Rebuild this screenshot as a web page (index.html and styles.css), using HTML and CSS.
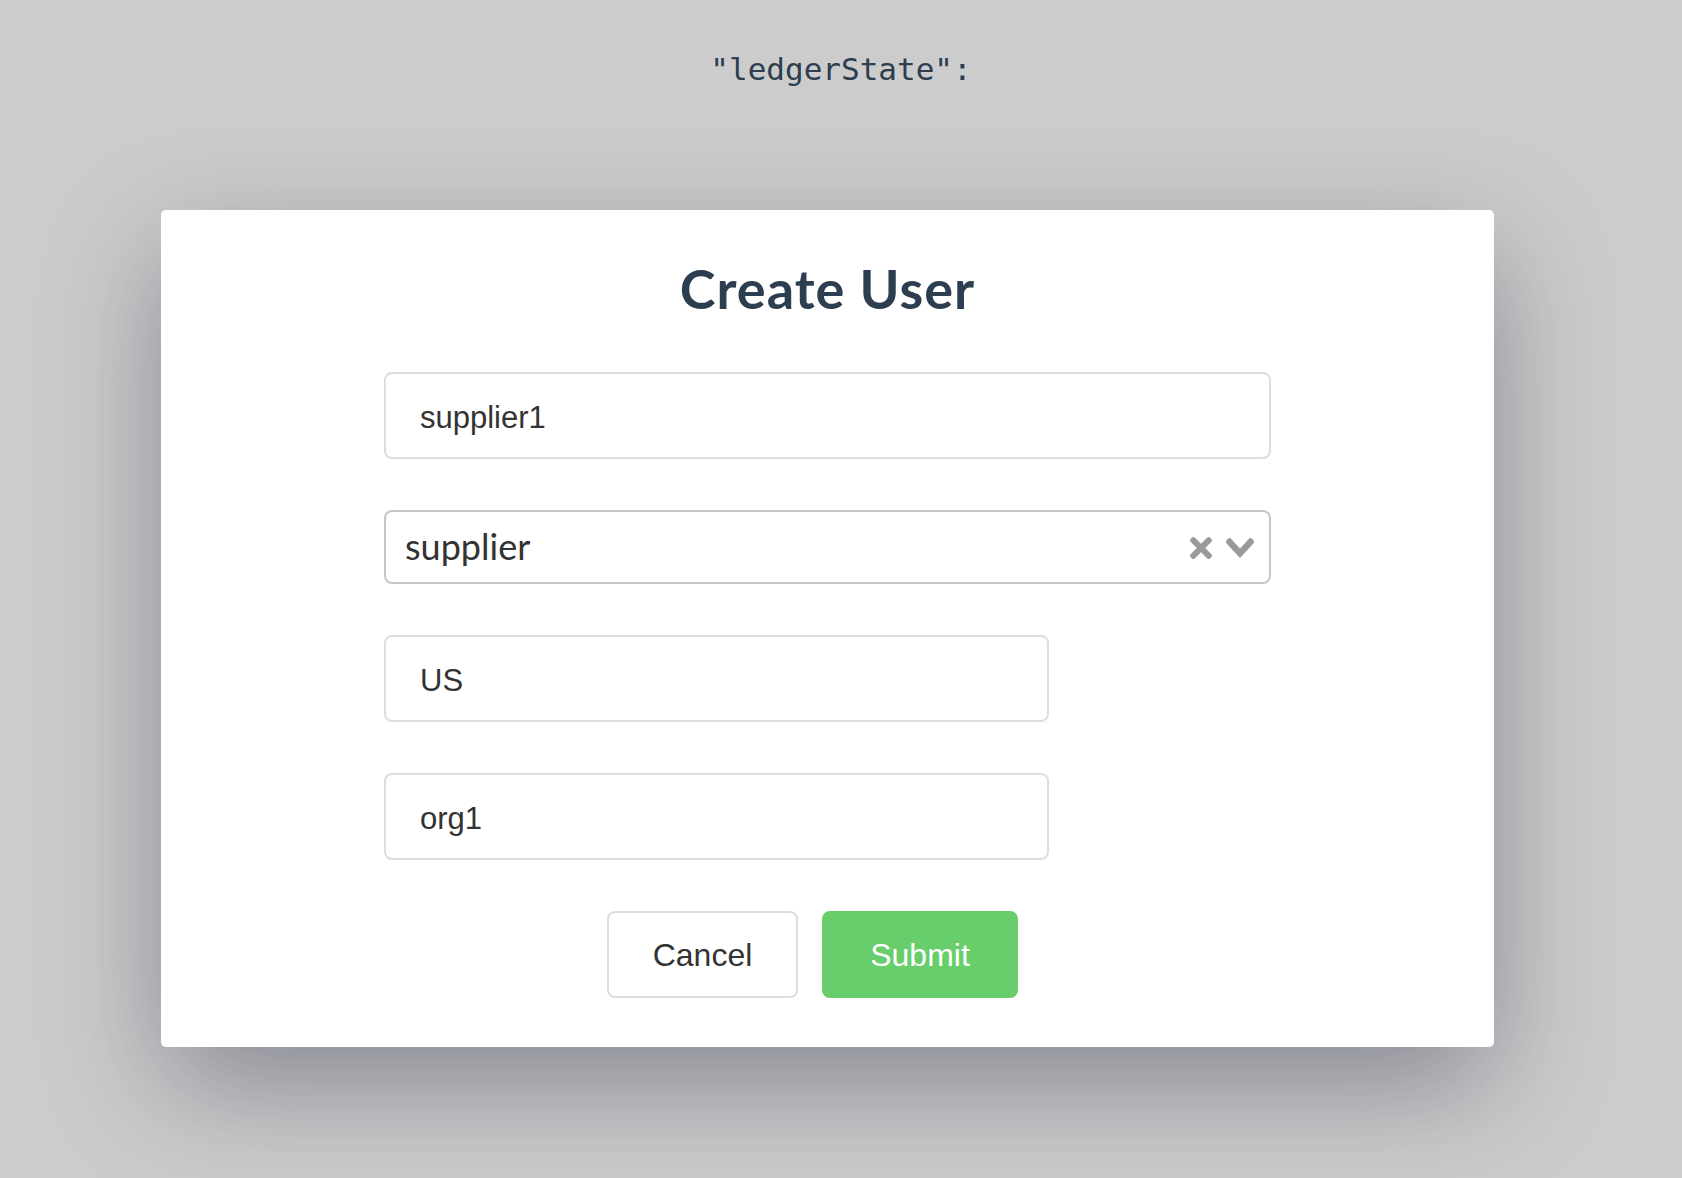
FILE: index.html
```html
<!DOCTYPE html>
<html lang="en">
<head>
<meta charset="utf-8">
<title>Create User</title>
<link rel="stylesheet" href="styles.css">
</head>
<body>
  <div class="page">
    <pre class="state">"ledgerState":</pre>
  </div>
  <div class="modal">
    <h1 class="title">Create User</h1>
    <form class="form">
      <input class="field" type="text" value="supplier1">
      <div class="select">
        <span class="select-value">supplier</span>
        <span class="select-actions">
          <svg class="icon-clear" width="22" height="22" viewBox="0 0 10 10"><path d="M6.895455 5l2.842897-2.842898c.348864-.348863.348864-.914488 0-1.263636L9.106534.261648c-.348864-.348864-.914489-.348864-1.263636 0L5 3.104545 2.157102.261648c-.348863-.348864-.914488-.348864-1.263636 0L.261648.893466c-.348864.348864-.348864.914489 0 1.263636L3.104545 5 .261648 7.842898c-.348864.348863-.348864.914488 0 1.263636l.631818.631818c.348864.348864.914773.348864 1.263636 0L5 6.895455l2.842898 2.842897c.348863.348864.914772.348864 1.263636 0l.631818-.631818c.348864-.348864.348864-.914489 0-1.263636L6.895455 5z"/></svg>
          <svg class="icon-open" width="30" height="20" viewBox="0 0 14 10"><path d="M9.211364 7.59931l4.48338-4.867229c.407008-.441854.407008-1.158247 0-1.60046l-.73712-.80023c-.407008-.441854-1.066904-.441854-1.474243 0L7 5.198617 2.51662.33139c-.407008-.441854-1.066904-.441854-1.474243 0l-.737121.80023c-.407008.441854-.407008 1.158248 0 1.600461l4.48338 4.867228L7 10l2.211364-2.40069z"/></svg>
        </span>
      </div>
      <input class="field field-short" type="text" value="US">
      <input class="field field-short" type="text" value="org1">
      <div class="actions">
        <button type="button" class="btn btn-cancel">Cancel</button>
        <button type="button" class="btn btn-submit">Submit</button>
      </div>
    </form>
  </div>
</body>
</html>
```
FILE: styles.css
```css
html, body {
  margin: 0;
  padding: 0;
}
body {
  background: #cccccc;
  height: 1178px;
  overflow: hidden;
  font-family: "Lato", "Liberation Sans", sans-serif;
}
.page {
  display: flex;
  justify-content: center;
  padding-top: 51px;
}
.state {
  margin: 0;
  font-family: "DejaVu Sans Mono", monospace;
  font-size: 31px;
  line-height: 36px;
  color: #2c3e50;
}
.modal {
  position: absolute;
  left: 161px;
  top: 210px;
  width: 1333px;
  height: 837px;
  box-sizing: border-box;
  background: #ffffff;
  border-radius: 5px;
  box-shadow: 0 40px 120px -4px rgba(27, 33, 58, 0.4);
  padding: 47px 223px 49px;
}
.title {
  margin: 0;
  text-align: center;
  font-family: "Lato", sans-serif;
  font-weight: 700;
  font-size: 54px;
  letter-spacing: 1px;
  line-height: 64px;
  color: #2c3e50;
}
.form {
  margin-top: 51px;
  display: flex;
  flex-direction: column;
  gap: 51px;
}
.field {
  box-sizing: border-box;
  width: 100%;
  height: 87px;
  margin: 0;
  border: 2px solid #dddddd;
  border-radius: 8px;
  padding: 4px 34px 0;
  font-family: "Liberation Sans", Arial, sans-serif;
  font-size: 31px;
  color: #333333;
  background: #ffffff;
  outline: none;
}
.field-short {
  width: 665px;
}
.select {
  box-sizing: border-box;
  height: 74px;
  border: 2px solid #c6c6c6;
  border-radius: 8px;
  display: flex;
  align-items: center;
  justify-content: space-between;
  padding: 0 14px 0 19px;
}
.select-value {
  font-family: "Lato", sans-serif;
  font-size: 36px;
  color: #333333;
  padding-bottom: 2px;
}
.select-actions {
  display: flex;
  align-items: center;
  gap: 13px;
  padding-top: 2px;
}
.select-actions svg {
  fill: #9a9a9a;
  display: block;
}
.actions {
  display: flex;
  justify-content: center;
  gap: 24px;
  padding-right: 30px;
}
.btn {
  box-sizing: border-box;
  height: 87px;
  border-radius: 8px;
  font-family: "Liberation Sans", Arial, sans-serif;
  font-size: 32px;
  padding: 2px 0 0;
  margin: 0;
  cursor: pointer;
}
.btn-cancel {
  width: 191px;
  background: #ffffff;
  border: 2px solid #dddddd;
  color: #333333;
}
.btn-submit {
  width: 196px;
  background: #68cd6b;
  border: 2px solid #68cd6b;
  color: #ffffff;
}
```
